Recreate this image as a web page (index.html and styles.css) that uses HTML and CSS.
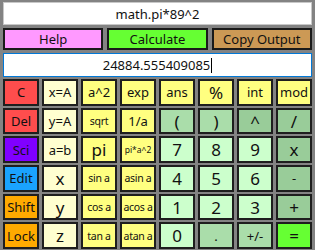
FILE: index.html
```html
<!DOCTYPE html>
<html lang="en">
<head>
  <meta charset="UTF-8" />
  <title>Calculator</title>
  <link rel="stylesheet" href="styles.css">
</head>
<body>
  <div class="app">
    <div class="field input">math.pi*89^2</div>

    <div class="actions">
      <div class="btn help">Help</div>
      <div class="btn calc">Calculate</div>
      <div class="btn copy">Copy Output</div>
    </div>

    <div class="field output">24884.555409085<span class="caret"></span></div>

    <div class="keys">
      <div class="key red">C</div>
      <div class="key pale">x=A</div>
      <div class="key yellow">a^2</div>
      <div class="key yellow">exp</div>
      <div class="key yellow">ans</div>
      <div class="key yellow big">%</div>
      <div class="key yellow">int</div>
      <div class="key yellow">mod</div>

      <div class="key red">Del</div>
      <div class="key pale">y=A</div>
      <div class="key yellow small">sqrt</div>
      <div class="key yellow">1/a</div>
      <div class="key mid big">(</div>
      <div class="key mid big">)</div>
      <div class="key dark big">^</div>
      <div class="key dark big">/</div>

      <div class="key purple">Sci</div>
      <div class="key pale">a=b</div>
      <div class="key yellow big">pi</div>
      <div class="key yellow tiny">pi*a^2</div>
      <div class="key light big">7</div>
      <div class="key light big">8</div>
      <div class="key light big">9</div>
      <div class="key dark big">x</div>

      <div class="key blue">Edit</div>
      <div class="key pale big">x</div>
      <div class="key yellow small">sin a</div>
      <div class="key yellow small">asin a</div>
      <div class="key light big">4</div>
      <div class="key light big">5</div>
      <div class="key light big">6</div>
      <div class="key dark">-</div>

      <div class="key orange">Shift</div>
      <div class="key pale big">y</div>
      <div class="key yellow small">cos a</div>
      <div class="key yellow small">acos a</div>
      <div class="key light big">1</div>
      <div class="key light big">2</div>
      <div class="key light big">3</div>
      <div class="key dark big">+</div>

      <div class="key orange">Lock</div>
      <div class="key pale big">z</div>
      <div class="key yellow small">tan a</div>
      <div class="key yellow small">atan a</div>
      <div class="key light big">0</div>
      <div class="key mid">.</div>
      <div class="key mid">+/-</div>
      <div class="key green big">=</div>
    </div>
  </div>
</body>
</html>
```

FILE: styles.css
```css
body {
  margin: 0;
  background: #838383;
  font-family: 'Noto Sans', 'Open Sans', sans-serif;
  color: #111;
  height: 250px;
  overflow: hidden;
}

.app {
  padding: 2px 3px 2px 3px;
  display: flex;
  flex-direction: column;
}

.field {
  height: 23px;
  box-sizing: border-box;
  background: #fff;
  border: 1px solid #c8c8c8;
  display: flex;
  justify-content: center;
  align-items: center;
  font-size: 13px;
}

.output {
  margin-top: 3px;
  height: 24px;
  border-color: #0078d7;
}

.caret {
  width: 1px;
  height: 15px;
  background: #000;
  margin-left: 1px;
}

.actions {
  margin-top: 3px;
  display: grid;
  grid-template-columns: 1fr 1fr 1fr;
  gap: 4px;
  height: 22px;
}

.btn {
  border: 2px solid #1a1a1a;
  box-sizing: border-box;
  display: flex;
  justify-content: center;
  align-items: center;
  font-size: 13px;
}

.help { background: #ff99ff; }
.calc { background: #66ff33; }
.copy { background: #cc9955; }

.keys {
  margin-top: 2px;
  display: grid;
  grid-template-columns: repeat(8, minmax(0, 1fr));
  grid-template-rows: repeat(6, minmax(0, 1fr));
  gap: 2px 3px;
  height: 170px;
}

.key {
  border: 2px solid #1e1e1e;
  box-sizing: border-box;
  display: flex;
  justify-content: center;
  align-items: center;
  font-size: 13px;
  white-space: nowrap;
  overflow: hidden;
}

.key.big { font-size: 17px; }
.key.small { font-size: 10.5px; letter-spacing: -0.3px; }
.key.tiny { font-size: 8.5px; }

.red { background: #ff4d4d; }
.purple { background: #8000ff; }
.blue { background: #1aa3ff; }
.orange { background: #ffaa00; }
.pale { background: #ffffd0; }
.yellow { background: #ffff80; }
.light { background: #ccffcc; }
.mid { background: #aaddaa; }
.dark { background: #99cc99; }
.green { background: #66ff33; }
```
